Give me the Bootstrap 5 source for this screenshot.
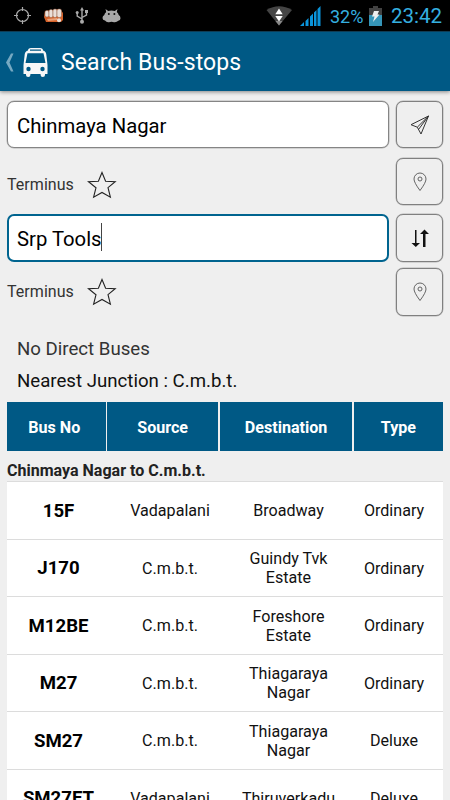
<!DOCTYPE html>
<html lang="en">
<head>
<meta charset="utf-8">
<meta name="viewport" content="width=device-width, initial-scale=1">
<title>Search Bus-stops</title>
<link rel="stylesheet" href="https://cdn.jsdelivr.net/npm/bootstrap@5.3.0/dist/css/bootstrap.min.css">
<style>
html, body { height: 100%; overflow: hidden; }
body { background: #efefef; color: #111; font-family: Roboto, "Liberation Sans", sans-serif; line-height: 1.2; }
svg { display: block; flex: none; }
.screen { height: 800px; width: 450px; }
.status { height: 31px; background: #000; color: #35b0e0; padding: 0 8px 0 14px; flex: none; }
.status .pct { font-size: 18px; line-height: 31px; width: 33px; margin: 1px 6px 0 9px; white-space: nowrap; }
.status .clock { font-size: 20.5px; line-height: 31px; width: 51px; margin: 1px 0 0 9px; white-space: nowrap; }
.i-fist { margin-left: 13px; }
.i-usb { margin-left: 12px; }
.i-droid { margin-left: 13px; }
.i-bars { margin-left: 7px; }
.appbar { height: 60px; background: #005985; color: #fff; padding: 2px 0 0 4px; flex: none; border-top: 1px solid #0f3c54; box-shadow: 0 1px 4px rgba(0,0,0,.45); }
.appbar h1 { font-size: 23px; letter-spacing: .1px; margin: 0 0 0 13px; font-weight: 400; }
.i-bus { margin-left: 9px; }
.finder { padding: 10px 7px 0; display: grid; grid-template-columns: 382px 47px; column-gap: 7px; grid-template-rows: 51px 50px 48px 48px; row-gap: 6px; align-items: start; flex: none; }
.field { height: 47px; background: #fff; border: 1px solid #858585; border-radius: 7px; box-shadow: 0 0 0 .5px #b5b5b5; font-size: 20.3px; color: #000; padding: 3px 0 0 9px; }
.field.active { height: 47.5px; border: 2px solid #00648f; box-shadow: none; padding: 2px 0 0 8px; }
.caret { width: 1px; height: 28px; background: #444; margin: -3px 0 0 -1px; }
.tool { height: 47px; width: 47px; border: 1px solid #808080; border-radius: 7px; box-shadow: 0 0 0 .5px #b5b5b5; background: #efefef; padding: 0; }
.tool.tall { height: 48px; }
.stop-kind { height: 47px; font-size: 16px; letter-spacing: .05px; color: #333; padding-top: 6px; }
.stop-kind.lower { padding-top: 1px; }
.stop-kind svg { margin-left: 13px; }
.summary { padding: 17px 17px 0; font-size: 18.65px; line-height: 32px; height: 86px; flex: none; }
.muted-line { color: #333; }
.heads, .line { display: grid; margin: 0 7px; text-align: center; flex: none; }
.heads { grid-template-columns: 98.500px 111px 132.500px 89px; column-gap: 1.67px; height: 49px; font-weight: 700; font-size: 16.100px; color: #fff; }
.heads > div { background: #005985; display: flex; align-items: center; justify-content: center; padding-top: 2px; }
.heads > :first-child { padding-right: 4px; }
.leg { height: 30px; padding: 10px 7px 0; font-weight: 700; font-size: 16.05px; line-height: 20px; color: #222; flex: none; }
.line { grid-template-columns: 103px 120px 117px 96px; height: 57.5px; background: #fff; border-top: 1px solid #dcdcdc; padding-top: 1px; align-items: center; font-size: 16.1px; line-height: 19px; color: #111; }
.line > :first-child { font-weight: 700; font-size: 18.6px; color: #000; padding-top: 1px; }
.line > :last-child { padding-right: 2px; }
</style>
<script src="https://cdn.jsdelivr.net/npm/bootstrap@5.3.0/dist/js/bootstrap.bundle.min.js"></script>
</head>
<body>
<div class="screen d-flex flex-column overflow-hidden">
  <div class="status d-flex align-items-center justify-content-between">
    <div class="d-flex align-items-center">
      <svg width="17" height="17" viewBox="0 0 17 17" fill="none" stroke="#aaa" stroke-width="1.2"><circle cx="8.500" cy="8.500" r="6"/><path d="M8.500 0v4M8.500 13v4M0 8.500h4M13 8.500h4"/></svg>
      <svg class="i-fist" width="19" height="16" viewBox="0 0 19 16"><path d="M1 3L16 1l3 4v7l-2 2H2L0 9z" fill="#d5622a"/><g fill="#eadfd8" stroke="#8e5a42" stroke-width=".5"><rect x="1" y="2.500" width="4" height="6.500" rx="1.800"/><rect x="5" y="1.500" width="4" height="8" rx="1.800"/><rect x="9" y="1" width="4" height="8.500" rx="1.800"/><rect x="13" y="1" width="4.500" height="8.500" rx="1.800"/></g><path d="M3 11l10-1 1 2-10 1z" fill="#e8a27a"/><circle cx="15" cy="12.300" r="2" fill="#eadfd8"/></svg>
      <svg class="i-usb" width="14" height="17" viewBox="0 0 14 17" fill="none" stroke="#aaa" stroke-width="1.400"><path d="M7 3v12M7 12L2.200 9V5.500M7 10.500L11.500 8V5"/><path d="M7 0l2 3.500H5z" fill="#aaa" stroke="none"/><circle cx="7" cy="14.800" r="2" fill="#aaa" stroke="none"/><circle cx="2.200" cy="5.500" r="1.500" fill="#aaa" stroke="none"/><path d="M10 3h3v3h-3z" fill="#aaa" stroke="none"/></svg>
      <svg class="i-droid" width="19" height="14" viewBox="0 0 19 14"><path d="M3.500 0l2.700 2q3.300-1 6.600 0L15.500 0l-.7 3q1.700 1.300 1.900 3 1.800.8 1.800 3.200 0 2.300-2.200 2.600-1.800 1.800-4.300 1.400-2.500-.8-5 0-2.500.4-4-1.600Q.5 11 .5 9 .5 6.800 2.300 6q.2-1.700 1.900-3z" fill="#a9a9a9"/><circle cx="6.800" cy="5" r="1" fill="#111"/><circle cx="12.400" cy="5" r="1" fill="#111"/></svg>
    </div>
    <div class="d-flex align-items-center">
      <svg width="27" height="20" viewBox="0 0 27 20"><path d="M.5 4Q13 -3.500 26 4L13 19.500z" fill="#444"/><path d="M13 19.500L9.500 15h7z" fill="#888"/><path d="M13 2.500l3.700 5.700H9.300zM13 15.500L9.300 10h7.400z" fill="#fff"/></svg>
      <svg class="i-bars" width="21" height="20" viewBox="0 0 21 20" fill="#0a94db"><path d="M0 20l4-4v4zM5.500 15l3-3v8h-3zM10 10.500l3-3V20h-3zM14 6.500l2.500-2.500v16H14zM17.500 3L20.500 0v20h-3z"/></svg>
      <span class="pct">32%</span>
      <svg width="13" height="20" viewBox="0 0 13 20"><path d="M4 0h5v2h4v7H0V2h4z" fill="#424242"/><path d="M0 9h13v11H0z" fill="#3595b8"/><path d="M5 5h5L8.500 8.500h2L4 16l1.500-5.500H3z" fill="#eee"/></svg>
      <span class="clock">23:42</span>
    </div>
  </div>
  <header class="appbar d-flex align-items-center">
    <svg width="10" height="19" viewBox="0 0 10 19"><path d="M7 .5h2.500L5.500 9.500l4 9H7L2 9.500z" fill="#76a9c2"/></svg>
    <svg class="i-bus" width="25" height="29" viewBox="0 0 25 29"><path d="M5 2.500Q5 0 8 0h9q3 0 3 2.500 3 .8 3.300 4L24.500 17v9h-2.500v1q0 2-2.200 2t-2.200-2v-1H7.400v1q0 2-2.200 2T3 27v-1H.5v-9L1.700 6.500Q2 3.300 5 2.500z" fill="#f7f7f7"/><path d="M7 1.500h11v1.200H7zM4.500 5.200h16L22.500 15h-20z" fill="#005985"/><circle cx="5.500" cy="21" r="2.200" fill="#005985"/><circle cx="19.500" cy="21" r="2.200" fill="#005985"/></svg>
    <h1>Search Bus-stops</h1>
  </header>
  <main class="finder">
    <div class="field d-flex align-items-center"><span>Chinmaya Nagar</span></div>
    <button class="tool btn d-flex align-items-center justify-content-center" aria-label="Locate"><svg width="20" height="20" viewBox="0 0 20 20" fill="none" stroke="#333" stroke-width="1"><path d="M18.500 1L1 9.700l6.300 2.500L11 19zM18.500 1L7.300 12.200M18.500 1L8.500 14.500"/></svg></button>
    <div class="stop-kind d-flex align-items-center"><span>Terminus</span><svg width="30" height="28" viewBox="0 0 30 28" fill="none" stroke="#222" stroke-width="1.100"><path d="M15 1.500L18.600 10.300 28.200 10.700 21 16.700 23.400 26.200 15 21.500 6.600 26.200 9 16.700 1.500 10.700 11.400 10.300z"/></svg></div>
    <button class="tool btn d-flex align-items-center justify-content-center" aria-label="Map"><svg width="14" height="20" viewBox="0 0 14 20" fill="none" stroke="#555" stroke-width=".9"><path d="M7 18.500Q1 10.500 1 7a6 6 0 0 1 12 0q0 3.500-6 11.500z"/><circle cx="7" cy="7" r="2"/></svg></button>
    <div class="field active d-flex align-items-center"><span>Srp Tools</span><i class="caret"></i></div>
    <button class="tool tall btn d-flex align-items-center justify-content-center" aria-label="Swap"><svg width="18" height="19" viewBox="0 0 18 19" fill="#111"><path d="M4 1h1.500v13H9l-4.200 4L.5 14H4zM12 18h2.500V5H18l-4.500-4.500L9 5h3z"/></svg></button>
    <div class="stop-kind lower d-flex align-items-center"><span>Terminus</span><svg width="30" height="28" viewBox="0 0 30 28" fill="none" stroke="#222" stroke-width="1.100"><path d="M15 1.500L18.600 10.300 28.200 10.700 21 16.700 23.400 26.200 15 21.500 6.600 26.200 9 16.700 1.500 10.700 11.400 10.300z"/></svg></div>
    <button class="tool tall btn d-flex align-items-center justify-content-center" aria-label="Map"><svg width="14" height="20" viewBox="0 0 14 20" fill="none" stroke="#555" stroke-width=".9"><path d="M7 18.500Q1 10.500 1 7a6 6 0 0 1 12 0q0 3.500-6 11.500z"/><circle cx="7" cy="7" r="2"/></svg></button>
  </main>
  <div class="summary">
    <div class="muted-line">No Direct Buses</div>
    <div>Nearest Junction : C.m.b.t.</div>
  </div>
  <div class="heads"><div>Bus No</div><div>Source</div><div>Destination</div><div>Type</div></div>
  <div class="leg">Chinmaya Nagar to C.m.b.t.</div>
  <div class="line"><div>15F</div><div>Vadapalani</div><div>Broadway</div><div>Ordinary</div></div>
  <div class="line"><div>J170</div><div>C.m.b.t.</div><div>Guindy Tvk<br>Estate</div><div>Ordinary</div></div>
  <div class="line"><div>M12BE</div><div>C.m.b.t.</div><div>Foreshore<br>Estate</div><div>Ordinary</div></div>
  <div class="line"><div>M27</div><div>C.m.b.t.</div><div>Thiagaraya<br>Nagar</div><div>Ordinary</div></div>
  <div class="line"><div>SM27</div><div>C.m.b.t.</div><div>Thiagaraya<br>Nagar</div><div>Deluxe</div></div>
  <div class="line"><div>SM27ET</div><div>Vadapalani</div><div>Thiruverkadu</div><div>Deluxe</div></div>
</div>
</body>
</html>
